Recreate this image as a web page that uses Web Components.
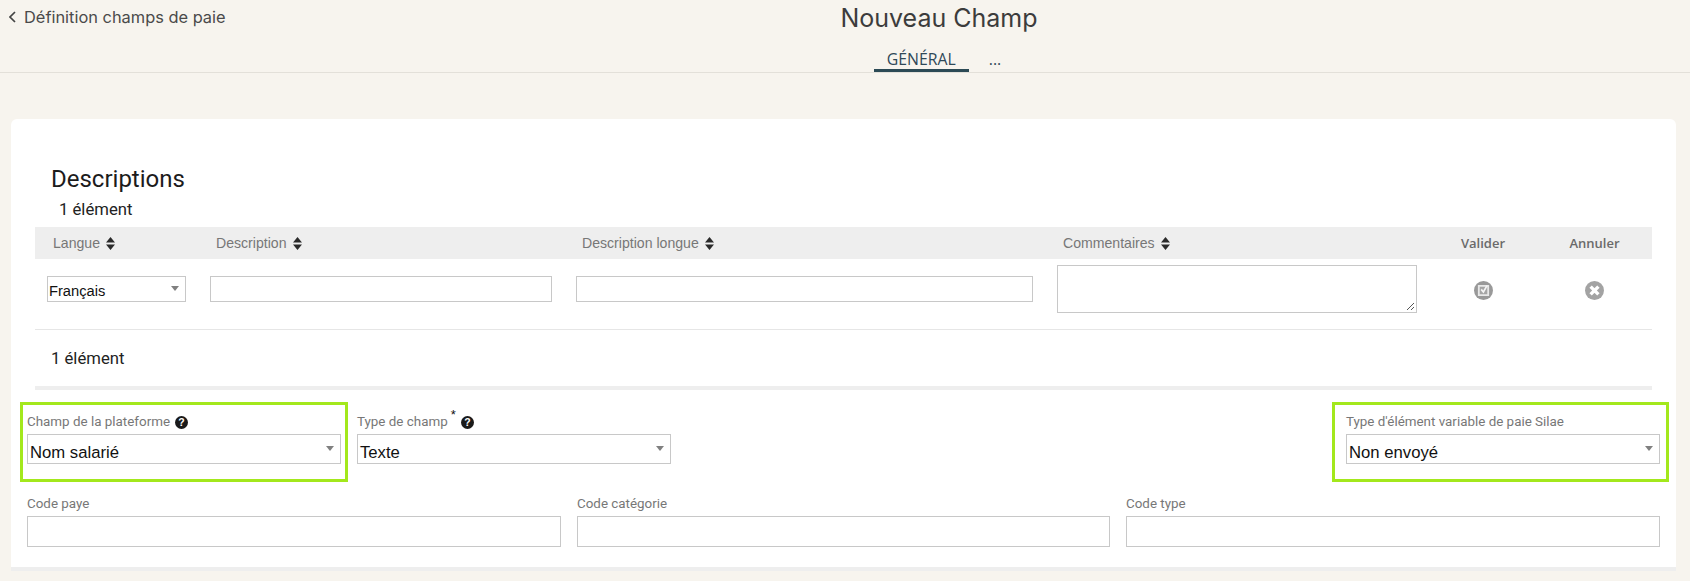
<!DOCTYPE html>
<html lang="fr">
<head>
<meta charset="utf-8">
<title>Nouveau Champ</title>
<style>
  html,body{margin:0;padding:0;background:#f7f4ee;}
  body{width:1690px;height:581px;overflow:hidden;font-family:"Roboto","Liberation Sans",sans-serif;}
</style>
</head>
<body>
<page-header back="Définition champs de paie" heading="Nouveau Champ">
  <tab-item active>GÉNÉRAL</tab-item>
  <tab-item>...</tab-item>
</page-header>

<app-card>
  <desc-table></desc-table>
  <field-row>
    <form-field label="Champ de la plateforme" help highlight><select-box big value="Nom salarié"></select-box></form-field>
    <form-field label="Type de champ" required help><select-box big value="Texte"></select-box></form-field>
    <form-field label="Type d'élément variable de paie Silae" highlight="wide" class="end"><select-box big value="Non envoyé"></select-box></form-field>
  </field-row>
  <field-row grid>
    <form-field label="Code paye"><text-box></text-box></form-field>
    <form-field label="Code catégorie"><text-box></text-box></form-field>
    <form-field label="Code type"><text-box></text-box></form-field>
  </field-row>
</app-card>

<script>
class PageHeader extends HTMLElement{
  constructor(){
    super();
    this.attachShadow({mode:'open'});
    this.shadowRoot.innerHTML = `
      <style>
        :host{display:grid;grid-template-columns:188px 1fr;height:72px;border-bottom:1px solid #e3e0d9;box-sizing:content-box;}
        .back{display:flex;align-items:center;gap:8px;width:max-content;height:34px;padding-left:9px;white-space:nowrap;
          font:16.4px "Inter","Roboto",sans-serif;color:#4a4a4a;}
        .back svg{flex:none;}
        .center{display:flex;flex-direction:column;align-items:center;}
        h1{margin:0;height:34px;font:400 25px/36px "Inter",sans-serif;color:#3c3c3c;}
        nav{display:flex;height:38px;align-items:flex-end;gap:7px;padding-left:10px;}
      </style>
      <div class="back">
        <svg width="7" height="12" viewBox="0 0 7 12"><path d="M6 1 1 6l5 5" fill="none" stroke="#444" stroke-width="1.7"/></svg>
        <span>${this.getAttribute('back')}</span>
      </div>
      <div class="center">
        <h1>${this.getAttribute('heading')}</h1>
        <nav><slot></slot></nav>
      </div>`;
  }
}

class TabItem extends HTMLElement{
  constructor(){
    super();
    this.attachShadow({mode:'open'});
    this.shadowRoot.innerHTML = `
      <style>
        :host{display:block;padding:2px 13px 0;height:27px;font:15.8px/24px "Open Sans",sans-serif;color:#2f4858;box-sizing:border-box;}
        :host([active]){border-bottom:3px solid #2c4a55;}
      </style>
      <slot></slot>`;
  }
}

class AppCard extends HTMLElement{
  constructor(){
    super();
    this.attachShadow({mode:'open'});
    this.shadowRoot.innerHTML = `
      <style>
        :host{display:block;box-sizing:border-box;width:1665px;height:452px;margin:46px 0 0 11px;background:#fff;
          border-radius:6px 6px 0 0;border-bottom:4px solid #eee;}
      </style>
      <slot></slot>`;
  }
}

class SortIcon extends HTMLElement{
  constructor(){
    super();
    this.attachShadow({mode:'open'});
    this.shadowRoot.innerHTML = `
      <style>:host{display:inline-flex;}</style>
      <svg width="9" height="13" viewBox="0 0 9 13"><path d="M4.5 0 9 5.5H0zM0 7.5h9L4.5 13z" fill="#2a2a2a"/></svg>`;
  }
}

class HelpIcon extends HTMLElement{
  constructor(){
    super();
    this.attachShadow({mode:'open'});
    this.shadowRoot.innerHTML = `
      <style>:host{display:inline-flex;}</style>
      <svg width="13" height="13" viewBox="0 0 13 13"><circle cx="6.5" cy="6.5" r="6.5" fill="#1a1a1a"/>
        <text x="6.5" y="10.2" text-anchor="middle" font-family="Liberation Sans" font-weight="700" font-size="10.5" fill="#fff">?</text></svg>`;
  }
}

class RoundIcon extends HTMLElement{
  constructor(){
    super();
    this.attachShadow({mode:'open'});
    const ok = this.getAttribute('type') === 'ok';
    this.shadowRoot.innerHTML = `
      <style>:host{display:flex;justify-content:center;padding-top:3px;}</style>
      ${ok ? `<svg width="19" height="19" viewBox="0 0 19 19"><circle cx="9.5" cy="9.5" r="9.5" fill="#999"/>
          <path d="M4.8 4.8h9.4v9.4H4.8z" fill="#a5a5a5" stroke="#e8e8e8" stroke-width="1.8"/>
          <path d="M7.2 8.4l2.2 2.6 3.6-6.4" fill="none" stroke="#f4f4f4" stroke-width="1.7"/></svg>`
        : `<svg width="19" height="19" viewBox="0 0 19 19"><circle cx="9.5" cy="9.5" r="9.5" fill="#a3a3a3"/>
          <path d="M5.6 5.6l7.8 7.8M13.4 5.6l-7.8 7.8" stroke="#fff" stroke-width="3.4"/></svg>`}`;
  }
}

class SelectBox extends HTMLElement{
  constructor(){
    super();
    this.attachShadow({mode:'open'});
    this.shadowRoot.innerHTML = `
      <style>
        :host{display:block;box-sizing:border-box;height:26px;border:1px solid #c8c8c8;background:#fff;position:relative;
          font:14.7px/28px "Liberation Sans",sans-serif;color:#111;padding-left:1px;}
        :host([big]){height:30px;font-size:16.7px;line-height:35px;padding-left:2px;}
        i{position:absolute;right:6px;top:9px;border:4px solid transparent;border-top:5px solid #808080;border-bottom:0;}
        :host([big]) i{top:11px;}
      </style>
      <span>${this.getAttribute('value')}</span><i></i>`;
  }
}

class TextBox extends HTMLElement{
  constructor(){
    super();
    this.attachShadow({mode:'open'});
    this.shadowRoot.innerHTML = `
      <style>
        :host{display:block;box-sizing:border-box;height:31px;border:1px solid #c8c8c8;background:#fff;}
        :host([small]){height:26px;}
        :host([area]){height:48px;position:relative;}
        svg{position:absolute;right:1px;bottom:1px;}
      </style>
      ${this.hasAttribute('area') ? '<svg width="9" height="9" viewBox="0 0 9 9"><path d="M1 8 8 1M5 8 8 5" stroke="#555" stroke-width="1"/></svg>' : ''}`;
  }
}

class DescTable extends HTMLElement{
  constructor(){
    super();
    this.attachShadow({mode:'open'});
    const head = (t)=>`<div class="th">${t}<sort-icon></sort-icon></div>`;
    this.shadowRoot.innerHTML = `
      <style>
        :host{display:block;padding:45px 24px 0;}
        h2{margin:0;font:400 24px/30px "Roboto",sans-serif;color:#1c1c1c;padding-left:16px;}
        .count{font:16.7px/20px "Roboto",sans-serif;color:#222;}
        .top{padding:6px 0 7px 24px;}
        .row{display:grid;grid-template-columns:163px 366px 481px 384px 108px 115px;}
        .head{height:32px;background:#eee;align-items:center;}
        .th{display:flex;align-items:center;gap:6px;padding-left:18px;font:14.1px "Liberation Sans",sans-serif;color:#777;}
        .th.act{padding:0;justify-content:center;font:600 13px "Open Sans",sans-serif;color:#6a6a6a;}
        .body{padding:6px 0 16px;align-items:center;border-bottom:1px solid #e6e6e6;}
        .td{padding:0 12px;}
        .foot{padding:19px 0 17px 16px;border-bottom:4px solid #eee;}
      </style>
      <h2>Descriptions</h2>
      <div class="count top">1 élément</div>
      <div class="row head">
        ${head('Langue')}${head('Description')}${head('Description longue')}${head('Commentaires')}
        <div class="th act">Valider</div><div class="th act">Annuler</div>
      </div>
      <div class="row body">
        <div class="td"><select-box value="Français"></select-box></div>
        <div class="td"><text-box small></text-box></div>
        <div class="td"><text-box small></text-box></div>
        <div class="td"><text-box area></text-box></div>
        <round-icon type="ok"></round-icon>
        <round-icon type="no"></round-icon>
      </div>
      <div class="count foot">1 élément</div>`;
  }
}

class FieldRow extends HTMLElement{
  constructor(){
    super();
    this.attachShadow({mode:'open'});
    this.shadowRoot.innerHTML = `
      <style>
        :host{display:flex;gap:16px;padding:24px 16px 0;}
        :host([grid]){display:grid;grid-template-columns:534px 533px 534px;padding-top:32px;}
        ::slotted(.end){margin-left:auto;}
      </style>
      <slot></slot>`;
  }
}

class FormField extends HTMLElement{
  constructor(){
    super();
    this.attachShadow({mode:'open'});
    const help = this.hasAttribute('help') ? '<help-icon></help-icon>' : '';
    const star = this.hasAttribute('required') ? '<sup>*</sup>' : '';
    this.shadowRoot.innerHTML = `
      <style>
        :host{display:block;position:relative;min-width:314px;}
        :host(:not([highlight]):not([required])){min-width:0;}
        label{display:flex;align-items:center;gap:5px;height:16px;margin-bottom:4px;font:13.4px/16px "Roboto",sans-serif;color:#777;white-space:nowrap;}
        sup{font:13px "Liberation Sans",sans-serif;color:#111;margin:-16px -1px 0 -2px;width:6px;}
        :host([highlight])::after{content:"";position:absolute;inset:-12px -7px -18px -7px;border:3px solid #a3e81c;pointer-events:none;}
        :host([highlight="wide"])::after{inset:-12px -9px -18px -14px;}
      </style>
      <label>${this.getAttribute('label')}${star}${help}</label>
      <slot></slot>`;
  }
}

customElements.define('page-header',PageHeader);
customElements.define('tab-item',TabItem);
customElements.define('app-card',AppCard);
customElements.define('sort-icon',SortIcon);
customElements.define('help-icon',HelpIcon);
customElements.define('round-icon',RoundIcon);
customElements.define('select-box',SelectBox);
customElements.define('text-box',TextBox);
customElements.define('desc-table',DescTable);
customElements.define('field-row',FieldRow);
customElements.define('form-field',FormField);
</script>
</body>
</html>
